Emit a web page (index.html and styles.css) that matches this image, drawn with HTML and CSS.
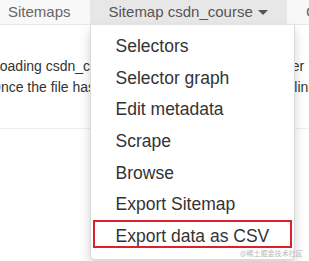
FILE: index.html
```html
<!DOCTYPE html>
<html>
<head>
<meta charset="utf-8">
<link rel="stylesheet" href="styles.css">
</head>
<body>
<nav class="navbar">
  <ul class="nav">
    <li class="nav-item"><a class="nav-link">Sitemaps</a></li>
    <li class="nav-item open">
      <a class="nav-link active">Sitemap csdn_course <span class="caret"></span></a>
      <ul class="dropdown">
        <li class="dd-item">Selectors</li>
        <li class="dd-item">Selector graph</li>
        <li class="dd-item">Edit metadata</li>
        <li class="dd-item">Scrape</li>
        <li class="dd-item">Browse</li>
        <li class="dd-item">Export Sitemap</li>
        <li class="dd-item highlighted">Export data as CSV<span class="mark"></span><span class="wm">@稀土掘金技术社区</span></li>
      </ul>
    </li>
    <li class="nav-item"><a class="nav-link">Create new sitemap</a></li>
  </ul>
</nav>
<main class="content">
  <p class="line">Loading csdn_course data, please wait, the server</p>
  <p class="line line-2">Once the file has been generated, the Download link will appear here.</p>
  <hr class="rule">
</main>
</body>
</html>
```

FILE: styles.css
```css
html, body {
  margin: 0;
  padding: 0;
  background: #fff;
  overflow: hidden;
  width: 309px;
  height: 261px;
}
body {
  font-family: "Liberation Sans", Arial, sans-serif;
  color: #333;
}
.navbar {
  background: #f8f8f8;
  border-bottom: 1px solid #e7e7e7;
  height: 24px;
  position: relative;
  z-index: 2;
}
.nav {
  list-style: none;
  margin: 0 0 0 -11px;
  padding: 0;
  display: flex;
  white-space: nowrap;
}
.nav-item {
  position: relative;
}
.nav-link {
  display: block;
  padding: 0 19px;
  line-height: 24px;
  font-size: 15px;
  color: #666;
}
.nav-link.active {
  background: #e7e7e7;
  color: #555;
}
.caret {
  display: inline-block;
  width: 0;
  height: 0;
  margin-left: 1px;
  vertical-align: middle;
  border-top: 5px solid #555;
  border-left: 5px solid transparent;
  border-right: 5px solid transparent;
  position: relative;
  top: -1px;
}
.dropdown {
  position: absolute;
  left: 0;
  top: 25px;
  width: 203px;
  margin: 0;
  padding: 6px 0 6px;
  list-style: none;
  background: #fff;
  border: 1px solid rgba(0,0,0,.15);
  border-top: none;
  border-radius: 0 0 5px 5px;
  box-shadow: 0 6px 12px rgba(0,0,0,.175);
}
.dd-item {
  position: relative;
  padding: 3px 25px;
  line-height: 25.67px;
  font-size: 17.5px;
  color: #333;
}
.mark {
  position: absolute;
  left: 2px;
  right: 2px;
  top: -1px;
  height: 28px;
  box-sizing: border-box;
  border: 2px solid #d9232d;
}
.wm {
  position: absolute;
  right: -9px;
  bottom: -5px;
  font-size: 7px;
  line-height: 9px;
  color: #b8b8b8;
  white-space: nowrap;
  font-family: "Noto Sans CJK SC", sans-serif;
}
.content {
  padding-top: 31px;
}
.line {
  margin: 0 0 0 -8px;
  font-size: 14px;
  line-height: 21px;
  white-space: nowrap;
  color: #333;
}
.line-2 {
  margin-left: -10px;
}
.rule {
  margin: 30px 0 0;
  border: 0;
  border-top: 1px solid #eee;
}
```
